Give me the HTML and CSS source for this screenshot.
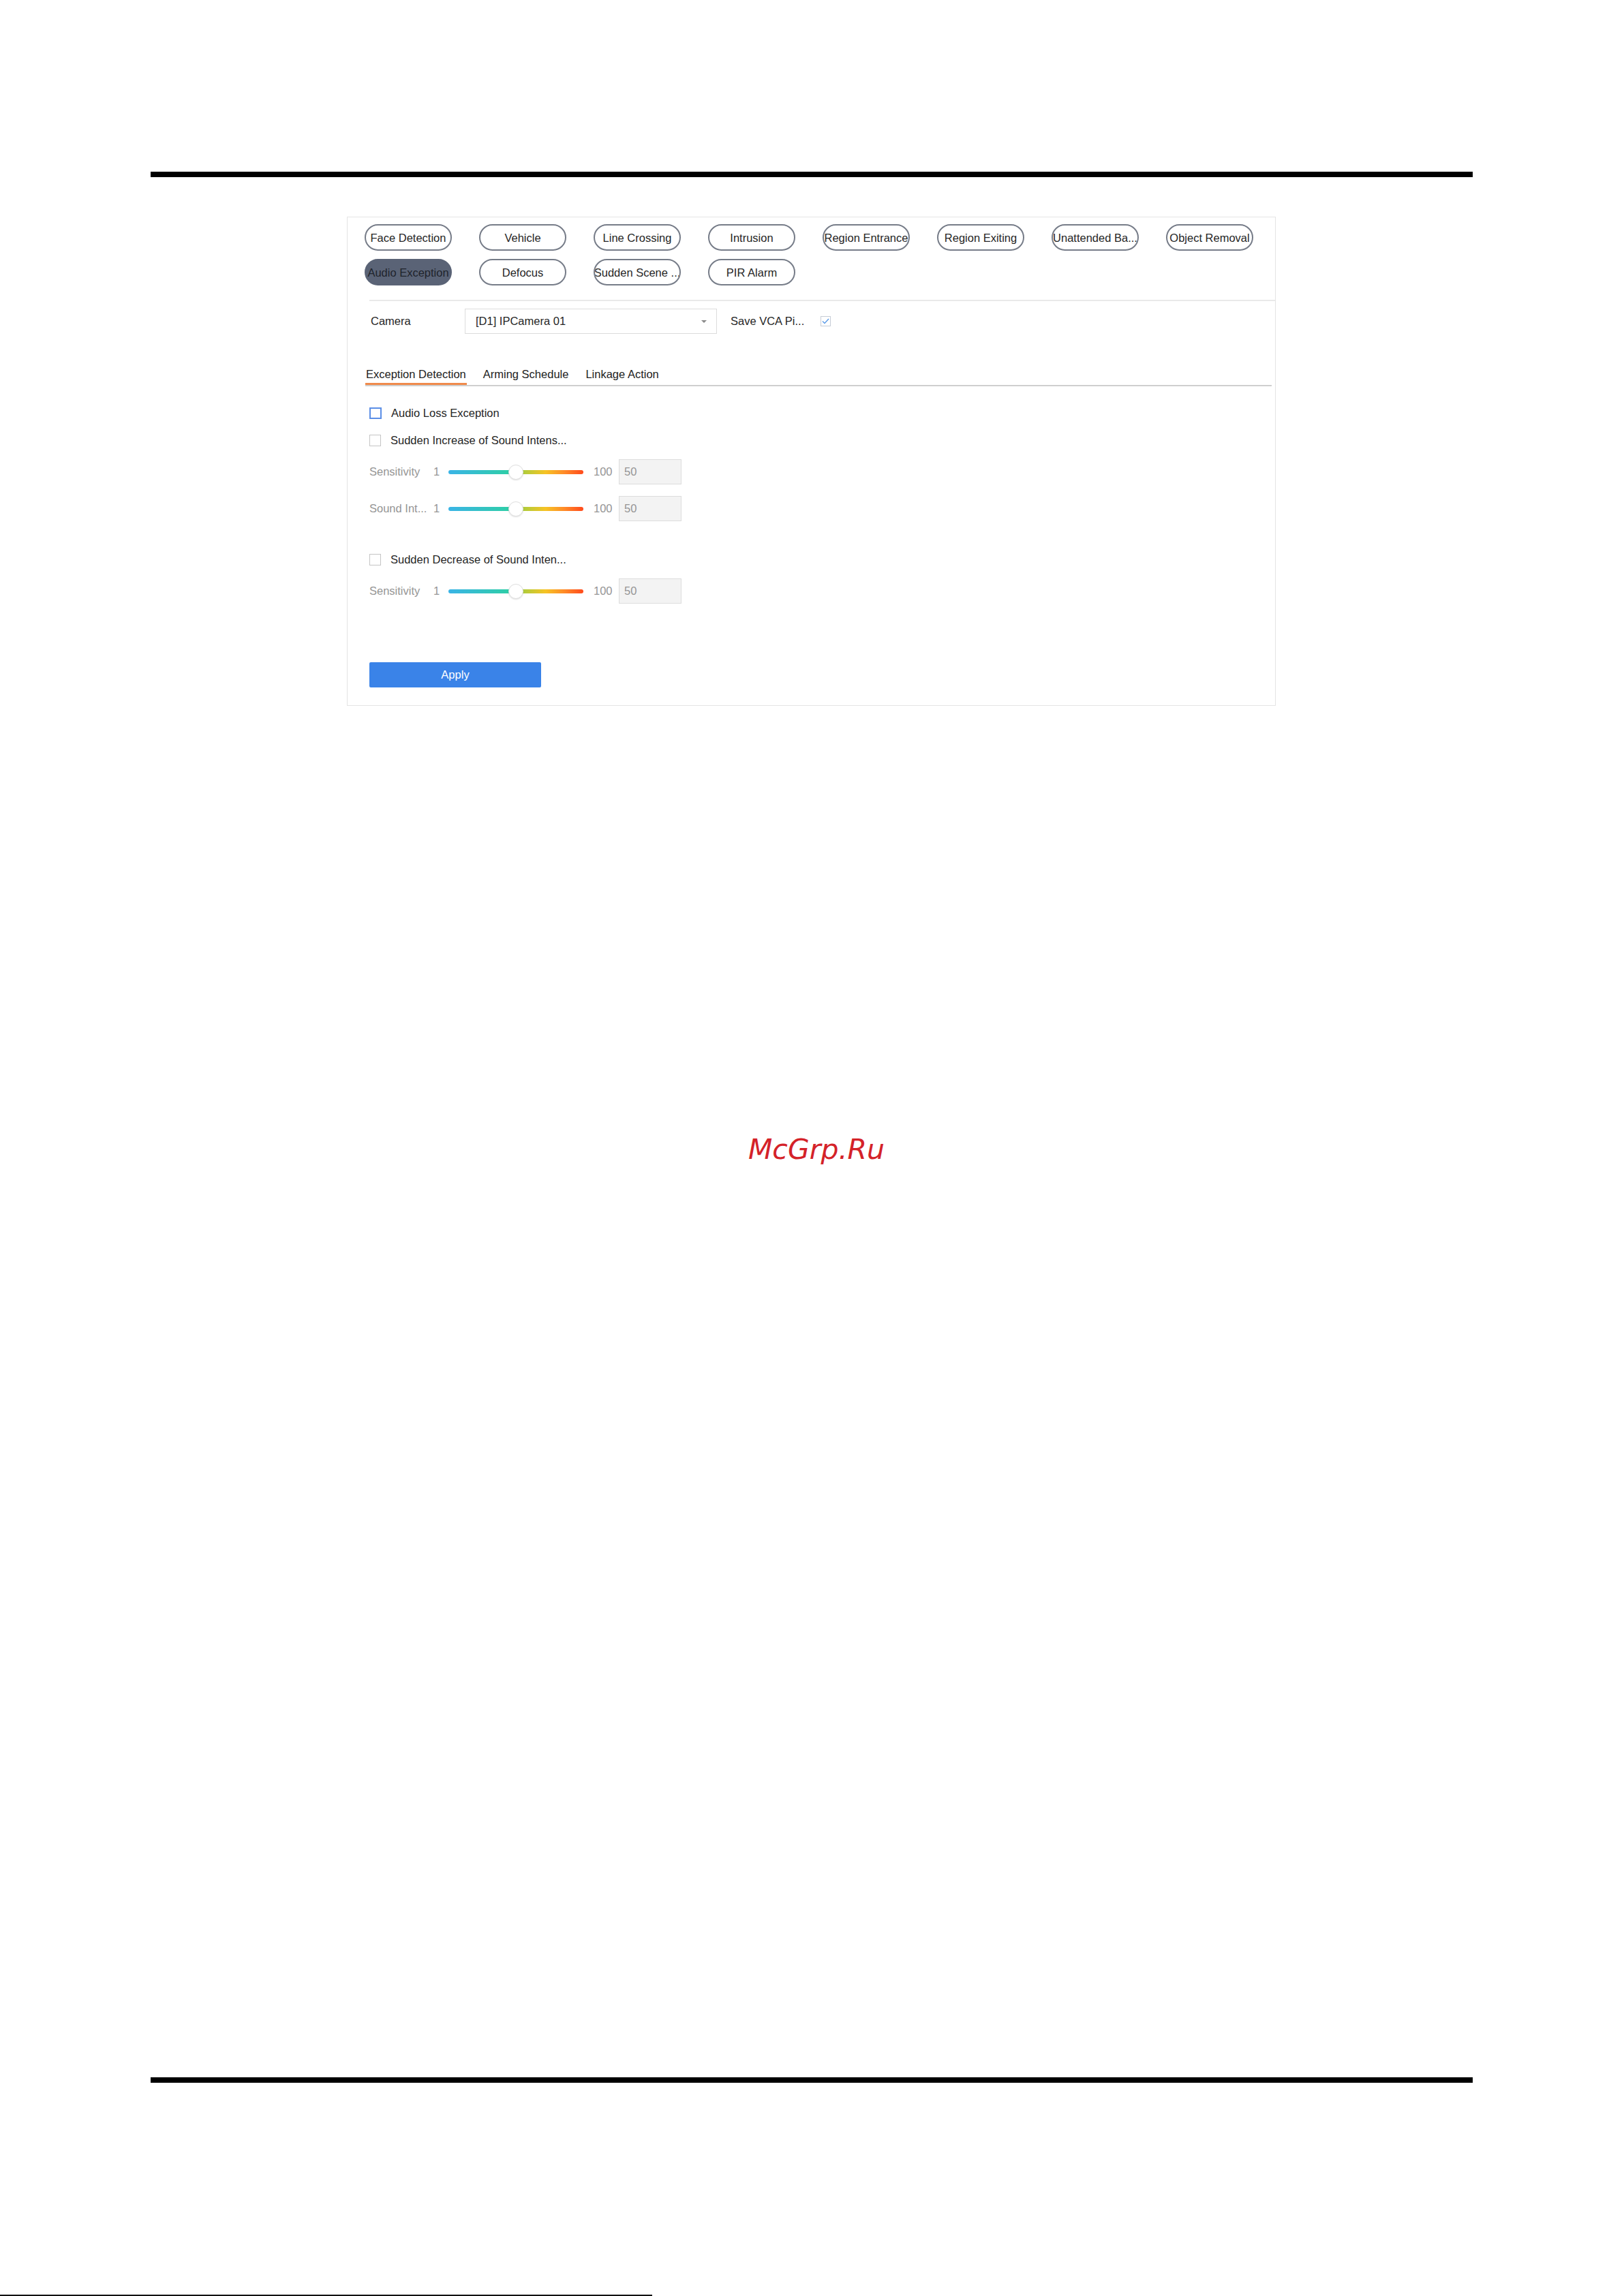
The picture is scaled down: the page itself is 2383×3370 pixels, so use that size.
FILE: index.html
```html
<!DOCTYPE html>
<html lang="en">
<head>
    <meta charset="UTF-8">
    <title>Audio Exception Detection</title>
    <link rel="stylesheet" href="styles.css">
</head>
<body>
<div class="page">

    <!-- Header rule -->
    <div class="rule rule-top"></div>

    <!-- Settings Panel -->
    <div class="panel">
        <div class="pills">
            <div class="pill">Face Detection</div>
            <div class="pill">Vehicle</div>
            <div class="pill">Line Crossing</div>
            <div class="pill">Intrusion</div>
            <div class="pill">Region Entrance</div>
            <div class="pill">Region Exiting</div>
            <div class="pill">Unattended Ba...</div>
            <div class="pill">Object Removal</div>
            <div class="pill pill-active">Audio Exception</div>
            <div class="pill">Defocus</div>
            <div class="pill">Sudden Scene ...</div>
            <div class="pill">PIR Alarm</div>
        </div>

        <div class="separator"></div>

        <div class="camera-row">
            <span class="camera-label">Camera</span>
            <div class="select">
                <span>[D1] IPCamera 01</span>
                <span class="caret"></span>
            </div>
            <span class="save-label">Save VCA Pi...</span>
            <span class="check check-light">
                <svg width="11" height="9" viewBox="0 0 11 9"><path d="M1 4.5 L4 7.5 L10 1" fill="none" stroke="#5b9be8" stroke-width="1.4"/></svg>
            </span>
        </div>

        <div class="tabs">
            <div class="tab tab-active">Exception Detection</div>
            <div class="tab">Arming Schedule</div>
            <div class="tab">Linkage Action</div>
        </div>

        <div class="options">
            <div class="opt-row first">
                <span class="box box-blue"></span>
                <span>Audio Loss Exception</span>
            </div>
            <div class="opt-row">
                <span class="box"></span>
                <span>Sudden Increase of Sound Intens...</span>
            </div>
            <div class="slider-row">
                <span class="s-label">Sensitivity</span>
                <span class="s-min">1</span>
                <div class="track"><span class="knob"></span></div>
                <span class="s-max">100</span>
                <div class="s-input">50</div>
            </div>
            <div class="slider-row second">
                <span class="s-label">Sound Int...</span>
                <span class="s-min">1</span>
                <div class="track"><span class="knob"></span></div>
                <span class="s-max">100</span>
                <div class="s-input">50</div>
            </div>
            <div class="opt-row gap-big">
                <span class="box"></span>
                <span>Sudden Decrease of Sound Inten...</span>
            </div>
            <div class="slider-row">
                <span class="s-label">Sensitivity</span>
                <span class="s-min">1</span>
                <div class="track"><span class="knob"></span></div>
                <span class="s-max">100</span>
                <div class="s-input">50</div>
            </div>
            <button class="apply">Apply</button>
        </div>
    </div>

    <div class="watermark">McGrp.Ru</div>

    <!-- Footer rule -->
    <div class="rule rule-bottom"></div>
    <div class="edge-line"></div>
</div>
</body>
</html>
```

FILE: styles.css
```css
/* General */
body {
    margin: 0;
    background: #ffffff;
    font-family: "Liberation Sans", Arial, sans-serif;
    font-size: 16.5px;
    color: #262626;
}

.page {
    width: 2383px;
    height: 3370px;
    overflow: hidden;
}

/* Page rules */
.rule {
    height: 8px;
    width: 1940px;
    margin-left: 221px;
    background: #000000;
}

.rule-top {
    margin-top: 252px;
}

.rule-bottom {
    margin-top: 1338px;
}

.edge-line {
    margin-top: 311px;
    width: 957px;
    height: 2px;
    background: #111111;
}

/* Panel */
.panel {
    margin-top: 58px;
    margin-left: 509px;
    width: 1361px;
    border: 1px solid #e4e4e4;
    padding-bottom: 26px;
}

.pills {
    display: grid;
    grid-template-columns: repeat(8, 128px);
    grid-auto-rows: 39px;
    column-gap: 40px;
    row-gap: 12px;
    padding: 10px 0 0 25px;
}

.pill {
    border: 2px solid #767c88;
    border-radius: 20px;
    display: flex;
    align-items: center;
    justify-content: center;
    white-space: nowrap;
    overflow: hidden;
    color: #262626;
    line-height: 20px;
}

.pill-active {
    background: #5a6376;
    border-color: #5a6376;
    color: #20242c;
}

.separator {
    margin: 21px 0 0 32px;
    height: 2px;
    background: #e9e9e9;
}

/* Camera row */
.camera-row {
    display: flex;
    align-items: center;
    margin: 11px 0 0 34px;
    height: 37px;
}

.camera-label {
    width: 138px;
}

.select {
    box-sizing: border-box;
    width: 370px;
    height: 37px;
    border: 1px solid #dcdcdc;
    display: flex;
    align-items: center;
    justify-content: space-between;
    padding: 0 14px 0 15px;
}

.caret {
    width: 0;
    height: 0;
    border-left: 4px solid transparent;
    border-right: 4px solid transparent;
    border-top: 4px solid #8a8a8a;
}

.save-label {
    margin-left: 20px;
    width: 132px;
    white-space: nowrap;
}

.check {
    box-sizing: border-box;
    width: 15px;
    height: 15px;
    border: 1px solid #c6ccd6;
    display: flex;
    align-items: center;
    justify-content: center;
}

/* Tabs */
.tabs {
    display: flex;
    gap: 23px;
    margin: 49px 0 0 26px;
    width: 1330px;
    border-bottom: 2px solid #cfcfcf;
}

.tab {
    line-height: 20px;
    padding: 0 1px 3px 1px;
    border-bottom: 3px solid transparent;
    color: #222222;
}

.tab-active {
    border-bottom-color: #f08a4b;
}

/* Options */
.options {
    padding-left: 32px;
}

.opt-row {
    display: flex;
    align-items: center;
    gap: 14px;
    height: 20px;
    margin-top: 20px;
    color: #262626;
}

.opt-row.first {
    margin-top: 29px;
}

.opt-row.gap-big {
    margin-top: 46px;
}

.box {
    box-sizing: border-box;
    width: 17px;
    height: 17px;
    border: 1px solid #c4c4c4;
}

.box-blue {
    width: 18px;
    border: 2px solid #5b8ee6;
}

.slider-row {
    display: flex;
    align-items: center;
    height: 37px;
    margin-top: 18px;
    color: #959595;
}

.slider-row.second {
    margin-top: 17px;
}

.s-label {
    width: 94px;
    white-space: nowrap;
}

.s-min {
    width: 22px;
}

.track {
    position: relative;
    width: 198px;
    height: 6px;
    border-radius: 3px;
    background: linear-gradient(90deg, #3ab4e6 0%, #2ed0a2 49%, #9ccf42 51%, #f6c324 72%, #ff8a28 86%, #ff4a1c 100%);
}

.knob {
    position: absolute;
    left: 88px;
    top: -8px;
    box-sizing: border-box;
    width: 22px;
    height: 22px;
    border-radius: 50%;
    background: #ffffff;
    border: 1px solid #e0e0e0;
    box-shadow: 0 1px 2px rgba(0, 0, 0, 0.12);
}

.s-max {
    margin-left: 15px;
    width: 37px;
}

.s-input {
    box-sizing: border-box;
    width: 92px;
    height: 37px;
    background: #f3f3f3;
    border: 1px solid #dddddd;
    padding-left: 7px;
    line-height: 35px;
}

.apply {
    display: block;
    margin-top: 86px;
    width: 252px;
    height: 37px;
    border: none;
    border-radius: 2px;
    background: #3a83e8;
    color: #ffffff;
    font-family: "Liberation Sans", Arial, sans-serif;
    font-size: 16.5px;
    padding: 0;
}

/* Watermark */
.watermark {
    margin-top: 627px;
    margin-left: 1098px;
    font-family: "DejaVu Sans", sans-serif;
    font-style: italic;
    font-size: 41px;
    line-height: 48px;
    color: #d42229;
}
```
